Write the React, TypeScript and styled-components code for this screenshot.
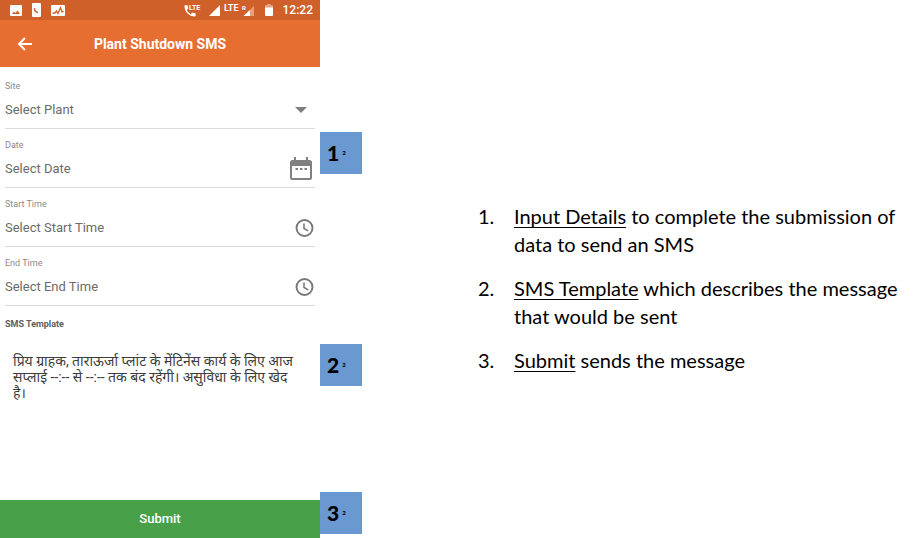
import React from "react";
import styled, { createGlobalStyle } from "styled-components";

const GlobalStyle = createGlobalStyle`
  *, *::before, *::after { box-sizing: border-box; }
  body { margin: 0; background: #fff; font-family: Roboto, "Noto Sans", sans-serif; }
`;

const Slide = styled.main`
  display: grid;
  grid-template-columns: minmax(0, 320fr) minmax(0, 600fr);
  min-height: 100vh;
`;

const Phone = styled.form`
  display: flex;
  flex-direction: column;
`;

const StatusBar = styled.div`
  display: flex;
  align-items: center;
  justify-content: space-between;
  height: 20px;
  padding: 0 7px 0 10px;
  background: #d06029;
  color: #fff;
`;

const StatusGroup = styled.div<{ $gap: number }>`
  display: flex;
  align-items: center;
  gap: ${(p) => p.$gap}px;
`;

const Clock = styled.span`
  font-size: 12px;
  font-weight: 500;
  line-height: 20px;
`;

const AppBar = styled.header`
  display: grid;
  grid-template-columns: 50px 1fr 50px;
  align-items: center;
  height: 47px;
  background: #e76e31;
  color: #fff;
`;

const BackButton = styled.button`
  display: flex;
  justify-content: center;
  padding: 0;
  border: 0;
  background: none;
  color: inherit;
`;

const Title = styled.h1`
  margin: 0;
  font-size: 14px;
  font-weight: 700;
  text-align: center;
`;

const Fields = styled.div`
  padding-top: 3px;
`;

const Section = styled.div`
  position: relative;
  padding: 0 5px;
`;

const FieldBox = styled.div`
  display: flex;
  flex-direction: column;
  height: 59px;
  padding-top: 10px;
  border-bottom: 1px solid #d9d9d9;
`;

const Label = styled.label<{ $strong?: boolean }>`
  display: block;
  color: ${(p) => (p.$strong ? "#5c5c5c" : "#8a8a8a")};
  font-size: 9px;
  font-weight: ${(p) => (p.$strong ? 700 : 400)};
  line-height: 12px;
`;

const Control = styled.div`
  display: grid;
  align-items: center;
  height: 38px;
  > * { grid-area: 1 / 1; }
`;

const controlText = `
  width: 100%;
  height: 24px;
  margin: 0;
  padding: 0;
  border: 0;
  outline: 0;
  background: transparent;
  color: #6b6b6b;
  font: 400 13px/24px Roboto, sans-serif;
`;

const Select = styled.select`
  ${controlText}
  appearance: none;
`;

const Input = styled.input`
  ${controlText}
  &::placeholder { color: #6b6b6b; opacity: 1; }
`;

const Trailing = styled.span<{ $inset: number }>`
  display: flex;
  justify-self: end;
  margin-right: ${(p) => p.$inset}px;
  pointer-events: none;
`;

const TemplateSection = styled(Section)`
  padding-top: 12px;
`;

const Message = styled.textarea`
  display: block;
  width: 100%;
  height: 64px;
  margin: 23px 0 0;
  padding: 0 22px 0 8px;
  border: 0;
  outline: 0;
  resize: none;
  overflow: hidden;
  background: transparent;
  color: #3c3c3c;
  font: 400 14px/16px Roboto, "Noto Sans", "Noto Sans Devanagari", sans-serif;
`;

const Footer = styled(Section)`
  margin-top: auto;
  padding: 0;
`;

const Submit = styled.button`
  display: block;
  width: 100%;
  height: 38px;
  padding: 0;
  border: 0;
  background: #48a048;
  color: #fff;
  font: 500 13px/38px Roboto, sans-serif;
`;

const Badge = styled.div<{ $top: number }>`
  position: absolute;
  top: ${(p) => p.$top}px;
  left: 100%;
  display: flex;
  align-items: center;
  gap: 3px;
  width: 42px;
  height: 42px;
  padding-left: 7px;
  background: #6a98d0;
  color: #000;
  font: 900 21px/42px Lato, sans-serif;
`;

const Tiny = styled.span`
  font-size: 6px;
`;

const Notes = styled.ol`
  align-self: center;
  display: flex;
  flex-direction: column;
  gap: 16px;
  margin: 0;
  padding: 38px 10px 0 158px;
  list-style: none;
  color: #000;
  font: 400 20px/28px Lato, sans-serif;
`;

const Note = styled.li`
  display: grid;
  grid-template-columns: 36px minmax(0, 1fr);
`;

const Term = styled.u`
  text-decoration-thickness: 1px;
  text-underline-offset: 3px;
  text-decoration-skip-ink: none;
`;

const ImageIcon = () => (
  <svg width="12" height="11" viewBox="0 0 12 11" aria-hidden="true">
    <rect width="12" height="11" rx="1" fill="#fff" />
    <path d="M2 9 4 6.5 5.5 8 7.5 5.5 10 9Z" fill="#d06029" />
  </svg>
);

const PhoneCardIcon = () => (
  <svg width="9" height="14" viewBox="0 0 9 14" aria-hidden="true">
    <rect width="9" height="14" rx="1" fill="#fff" />
    <path d="M2.5 5v1.5Q3 9 6 9.5" fill="none" stroke="#d06029" strokeWidth="1.4" />
  </svg>
);

const PulseIcon = () => (
  <svg width="14" height="11" viewBox="0 0 14 11" aria-hidden="true">
    <rect width="14" height="11" rx="1" fill="#fff" />
    <path d="M1.5 8h2.5l1.5-2 1.5 2.5L9.5 2.5 11 7l1.5-1" fill="none" stroke="#d06029" strokeWidth="1.3" />
  </svg>
);

const CallIcon = () => (
  <svg width="17" height="14" viewBox="0 0 17 14" aria-hidden="true">
    <path
      transform="translate(-1.4 .4) scale(.62)"
      d="M6.62 10.79c1.44 2.83 3.76 5.14 6.59 6.59l2.2-2.2c.27-.27.67-.36 1.02-.24 1.12.37 2.33.57 3.57.57.55 0 1 .45 1 1V20c0 .55-.45 1-1 1-9.39 0-17-7.61-17-17 0-.55.45-1 1-1h3.5c.55 0 1 .45 1 1 0 1.25.2 2.45.57 3.57.11.35.03.74-.25 1.02l-2.2 2.2z"
      fill="#fff"
    />
    <text x="5" y="6.5" fill="#fff" fontFamily="Roboto" fontSize="7" fontWeight="700">LTE</text>
  </svg>
);

const SignalIcon = () => (
  <svg width="12" height="12" viewBox="0 0 12 12" aria-hidden="true">
    <path d="M12 1v11H1Z" fill="#fff" />
  </svg>
);

const RoamingIcon = () => (
  <svg width="31" height="14" viewBox="0 0 31 14" aria-hidden="true">
    <text x="0" y="8" fill="#fff" fontFamily="Roboto" fontSize="9" fontWeight="700">LTE</text>
    <text x="18" y="6.5" fill="#fff" fontFamily="Roboto" fontSize="6" fontWeight="700">R</text>
    <path d="M30 3v10H19.5Z" fill="#fff" opacity=".4" />
    <path d="M26 7v6h-6.500Z" fill="#fff" />
  </svg>
);

const BatteryIcon = () => (
  <svg width="8" height="12" viewBox="0 0 8 12" aria-hidden="true">
    <path d="M2.3 0h3.4v1.3H8V4H0V1.3h2.3Z" fill="#fff" opacity=".45" />
    <path d="M0 3.5h8V11q0 1-1 1H1q-1 0-1-1Z" fill="#fff" />
  </svg>
);

const BackIcon = () => (
  <svg width="16" height="14" viewBox="0 0 16 14" fill="none" stroke="currentColor" strokeWidth="1.9" aria-hidden="true">
    <path d="M15 7H2M8 1 2 7l6 6" />
  </svg>
);

const ArrowIcon = () => (
  <svg width="12" height="6" viewBox="0 0 12 6" aria-hidden="true">
    <path d="M0 0h12L6 6Z" fill="#808080" />
  </svg>
);

const CalendarIcon = () => (
  <svg width="22" height="24" viewBox="0 0 22 24" aria-hidden="true">
    <path
      d="M4 0h2v3h10V0h2v3h1.5Q22 3 22 5.5v15Q22 23 19.5 23h-17Q0 23 0 20.5v-15Q0 3 2.5 3H4ZM2 9v12h18V9Z"
      fill="#808080"
      fillRule="evenodd"
    />
    <path d="M5.5 11H8v2H5.5ZM10 11h2.500v2H10ZM14.500 11H17v2h-2.500Z" fill="#808080" />
  </svg>
);

const TimeIcon = () => (
  <svg width="19" height="18" viewBox="0 0 19 18" fill="none" stroke="#777" aria-hidden="true">
    <circle cx="9.5" cy="9" r="8" strokeWidth="1.9" />
    <path d="M9 4.5v5l4.2 2.400" strokeWidth="1.500" />
  </svg>
);

type FieldProps = {
  id: string;
  label: string;
  inset: number;
  icon: React.ReactNode;
  badge?: string;
  children: React.ReactNode;
};

const Marker = ({ n, top }: { n: string; top: number }) => (
  <Badge $top={top}>
    {n}
    <Tiny>2</Tiny>
  </Badge>
);

const Field = ({ id, label, inset, icon, badge, children }: FieldProps) => (
  <Section>
    <FieldBox>
      <Label htmlFor={id}>{label}</Label>
      <Control>
        {children}
        <Trailing $inset={inset}>{icon}</Trailing>
      </Control>
    </FieldBox>
    {badge && <Marker n={badge} top={3} />}
  </Section>
);

const message =
  "प्रिय ग्राहक, ताराऊर्जा प्लांट के मेंटिनेंस कार्य के लिए आज सप्लाई --:-- से --:-- तक बंद रहेंगी। असुविधा के लिए खेद है।";

const notes = [
  { term: "Input Details", text: " to complete the submission of data to send an SMS" },
  { term: "SMS Template", text: " which describes the message that would be sent" },
  { term: "Submit", text: " sends the message" },
];

export default function App() {
  return (
    <>
      <GlobalStyle />
      <Slide>
        <Phone onSubmit={(e) => e.preventDefault()}>
          <StatusBar>
            <StatusGroup $gap={10}>
              <ImageIcon />
              <PhoneCardIcon />
              <PulseIcon />
            </StatusGroup>
            <StatusGroup $gap={10}>
              <StatusGroup $gap={4}>
                <StatusGroup $gap={7}>
                  <CallIcon />
                  <SignalIcon />
                </StatusGroup>
                <RoamingIcon />
              </StatusGroup>
              <BatteryIcon />
              <Clock>12:22</Clock>
            </StatusGroup>
          </StatusBar>
          <AppBar>
            <BackButton type="button" aria-label="Back">
              <BackIcon />
            </BackButton>
            <Title>Plant Shutdown SMS</Title>
          </AppBar>
          <Fields>
            <Field id="site" label="Site" inset={8} icon={<ArrowIcon />}>
              <Select id="site">
                <option>Select Plant</option>
              </Select>
            </Field>
            <Field id="date" label="Date" inset={3} icon={<CalendarIcon />} badge="1">
              <Input id="date" placeholder="Select Date" />
            </Field>
            <Field id="start" label="Start Time" inset={1} icon={<TimeIcon />}>
              <Input id="start" placeholder="Select Start Time" />
            </Field>
            <Field id="end" label="End Time" inset={1} icon={<TimeIcon />}>
              <Input id="end" placeholder="Select End Time" />
            </Field>
          </Fields>
          <TemplateSection>
            <Label htmlFor="template" $strong>
              SMS Template
            </Label>
            <Message id="template" defaultValue={message} />
            <Marker n="2" top={38} />
          </TemplateSection>
          <Footer>
            <Submit type="submit">Submit</Submit>
            <Marker n="3" top={-8} />
          </Footer>
        </Phone>
        <Notes>
          {notes.map((note, i) => (
            <Note key={note.term}>
              <span>{i + 1}.</span>
              <span>
                <Term>{note.term}</Term>
                {note.text}
              </span>
            </Note>
          ))}
        </Notes>
      </Slide>
    </>
  );
}
